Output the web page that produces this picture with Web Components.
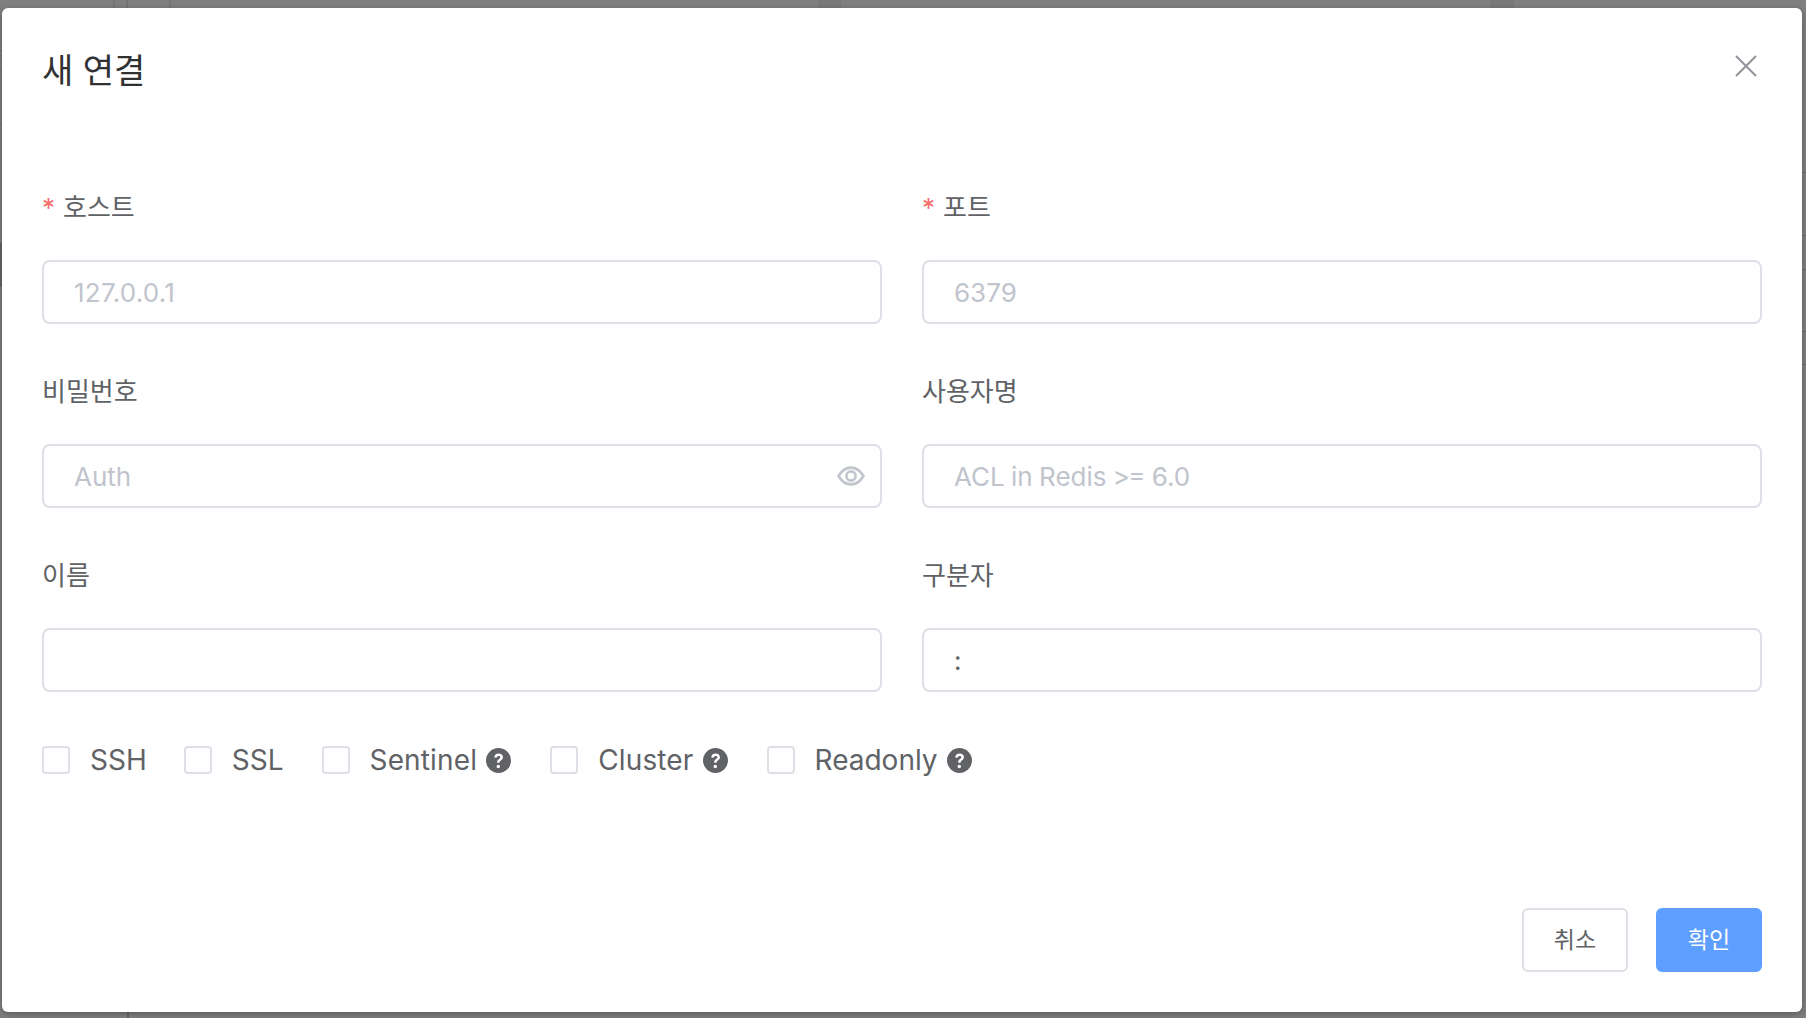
<!DOCTYPE html>
<html lang="ko"><head><meta charset="utf-8"><title>새 연결</title>
<style>
html,body{margin:0;height:100%;overflow:hidden}
body{background:
linear-gradient(#747474,#747474) 113px 0/2px 8px no-repeat,
linear-gradient(#747474,#747474) 126px 0/2px 8px no-repeat,
linear-gradient(#747474,#747474) 169px 0/2px 8px no-repeat,
linear-gradient(#787878,#787878) 818px 0/23px 8px no-repeat,
linear-gradient(#787878,#787878) 1490px 0/24px 8px no-repeat,
linear-gradient(#666,#666) 127px 1012px/2px 6px no-repeat,
linear-gradient(#666,#666) 0 243px/2px 44px no-repeat,
linear-gradient(#6c6c6c,#6c6c6c) 0 50px/2px 1px no-repeat,
linear-gradient(#6c6c6c,#6c6c6c) 0 70px/2px 1px no-repeat,
linear-gradient(#6c6c6c,#6c6c6c) 0 124px/2px 1px no-repeat,
linear-gradient(#6c6c6c,#6c6c6c) 1802px 172px/4px 1px no-repeat,
linear-gradient(#6c6c6c,#6c6c6c) 1802px 235px/4px 1px no-repeat,
linear-gradient(#6c6c6c,#6c6c6c) 1802px 269px/4px 1px no-repeat,
linear-gradient(#6c6c6c,#6c6c6c) 1802px 331px/4px 1px no-repeat,
linear-gradient(#6c6c6c,#6c6c6c) 1802px 364px/4px 1px no-repeat,
#7f7f7f;font-family:Inter,"Noto Sans CJK KR",sans-serif;}
</style></head><body>
<template id="t-field"><style>
:host{display:block;min-width:0}
.lab{display:block;height:48px;font-size:26px;line-height:48px;color:#606266;margin-bottom:28px}
.req{color:#f56c6c;margin-right:8px}
.box{position:relative;box-sizing:border-box;height:64px;border:2px solid #dcdfe6;border-radius:8px;background:#fff;display:flex;align-items:center;padding:0 30px;font-size:26px;color:#606266}
.eye{position:absolute;right:15px;top:50%;transform:translateY(-50%);width:28px;height:28px;display:block}
</style><label class="lab"><span class="req" part="req">*</span><slot name="label"></slot></label>
<div class="box"><span class="t"><slot></slot></span>
<svg class="eye" viewBox="0 0 28 28" fill="none" stroke="#c0c4cc"><path d="M1.500 14C5 8.200 9 5.600 14 5.600S23 8.200 26.500 14C23 19.800 19 22.400 14 22.400S5 19.800 1.500 14Z" stroke-width="2.600"/><circle cx="14" cy="14" r="4.600" stroke-width="2.600"/></svg></div></template>
<template id="t-check"><style>
:host{display:flex;align-items:center;font-size:28px;color:#606266;height:40px}
.b{box-sizing:border-box;width:28px;height:28px;border:2px solid #dcdfe6;border-radius:4px;background:#fff;margin-right:20px;flex:none}
svg{width:25px;height:25px;margin-left:9px;flex:none}
</style><span class="b"></span><slot></slot>
<svg viewBox="0 0 25 25"><circle cx="12.500" cy="12.500" r="12.500" fill="#606266"/><path d="M8.200 9.600c.1-2.700 1.900-4.200 4.400-4.200 2.600 0 4.400 1.500 4.400 3.700 0 1.600-.8 2.500-2.100 3.400-1 .7-1.300 1.100-1.300 2.300h-2.500c0-1.900.5-2.800 1.900-3.700.9-.6 1.300-1.100 1.300-1.800 0-.9-.7-1.400-1.700-1.400-1.100 0-1.800.7-1.900 1.800Z" fill="#fff"/><circle cx="12.300" cy="18.500" r="1.700" fill="#fff"/></svg></template>
<template id="t-btn"><style>
:host{display:flex;align-items:center;justify-content:center;box-sizing:border-box;width:106px;height:64px;padding-bottom:4px;border:2px solid #dcdfe6;border-radius:6px;background:#fff;color:#606266;font-size:23px}
:host([primary]){background:#5e9eff;border-color:#5e9eff;color:#fff}
</style><slot></slot></template>
<template id="t-dialog"><style>
:host{display:block;position:relative;box-sizing:border-box;width:1800px;height:1004px;margin:8px 0 0 2px;background:#fff;border-radius:6px;box-shadow:0 2px 6px rgba(0,0,0,.3);padding:0 40px}
header{height:176px;padding-top:35px;box-sizing:border-box}
h1{margin:0;font-size:34px;font-weight:400;color:#303133;line-height:56px;}
.x{position:absolute;left:1733px;top:47px;width:22px;height:22px}
.grid{display:grid;grid-template-columns:840px 840px;column-gap:40px;row-gap:44px}
.checks{display:flex;margin-top:48px;align-items:center}
.foot{position:absolute;right:40px;bottom:40px;display:flex;gap:28px}
</style><header><h1><slot name="title"></slot></h1></header>
<svg class="x" viewBox="0 0 22 22" stroke="#909399" stroke-width="2" fill="none"><path d="M1 1l20 20M21 1L1 21"/></svg>
<div class="grid"><slot name="fields"></slot></div>
<div class="checks"><slot name="checks"></slot></div>
<div class="foot"><slot name="foot"></slot></div></template>
<conn-dialog>
<span slot="title">새 연결</span>
<conn-field slot="fields" required><span slot="label">호스트</span><span class="ph" style="letter-spacing:.25px">127.0.0.1</span></conn-field>
<conn-field slot="fields" required><span slot="label">포트</span><span class="ph">6379</span></conn-field>
<conn-field slot="fields" eye><span slot="label">비밀번호</span><span class="ph">Auth</span></conn-field>
<conn-field slot="fields"><span slot="label">사용자명</span><span class="ph" style="word-spacing:-1px">ACL in Redis <span style="letter-spacing:-1.800px">&gt;</span>= 6.0</span></conn-field>
<conn-field slot="fields"><span slot="label">이름</span></conn-field>
<conn-field slot="fields"><span slot="label">구분자</span><span>:</span></conn-field>
<conn-check slot="checks" style="margin-right:37px">SSH</conn-check>
<conn-check slot="checks" style="margin-right:38px">SSL</conn-check>
<conn-check slot="checks" help style="margin-right:39px;letter-spacing:.15px">Sentinel</conn-check>
<conn-check slot="checks" help style="margin-right:39px;letter-spacing:.15px">Cluster</conn-check>
<conn-check slot="checks" help>Readonly</conn-check>
<conn-btn slot="foot">취소</conn-btn>
<conn-btn slot="foot" primary>확인</conn-btn>
</conn-dialog>
<style>.ph{color:#c0c4cc}</style>
<script>
function def(n,id,after){customElements.define(n,class extends HTMLElement{constructor(){super();this.attachShadow({mode:'open'}).appendChild(document.getElementById(id).content.cloneNode(true));}connectedCallback(){after&&after(this)}})}
def('conn-field','t-field',e=>{if(!e.hasAttribute('required'))e.shadowRoot.querySelector('.req').remove();if(!e.hasAttribute('eye'))e.shadowRoot.querySelector('.eye').remove();});
def('conn-check','t-check',e=>{if(!e.hasAttribute('help'))e.shadowRoot.querySelector('svg').remove();});
def('conn-btn','t-btn');
def('conn-dialog','t-dialog');
</script>
</body></html>
